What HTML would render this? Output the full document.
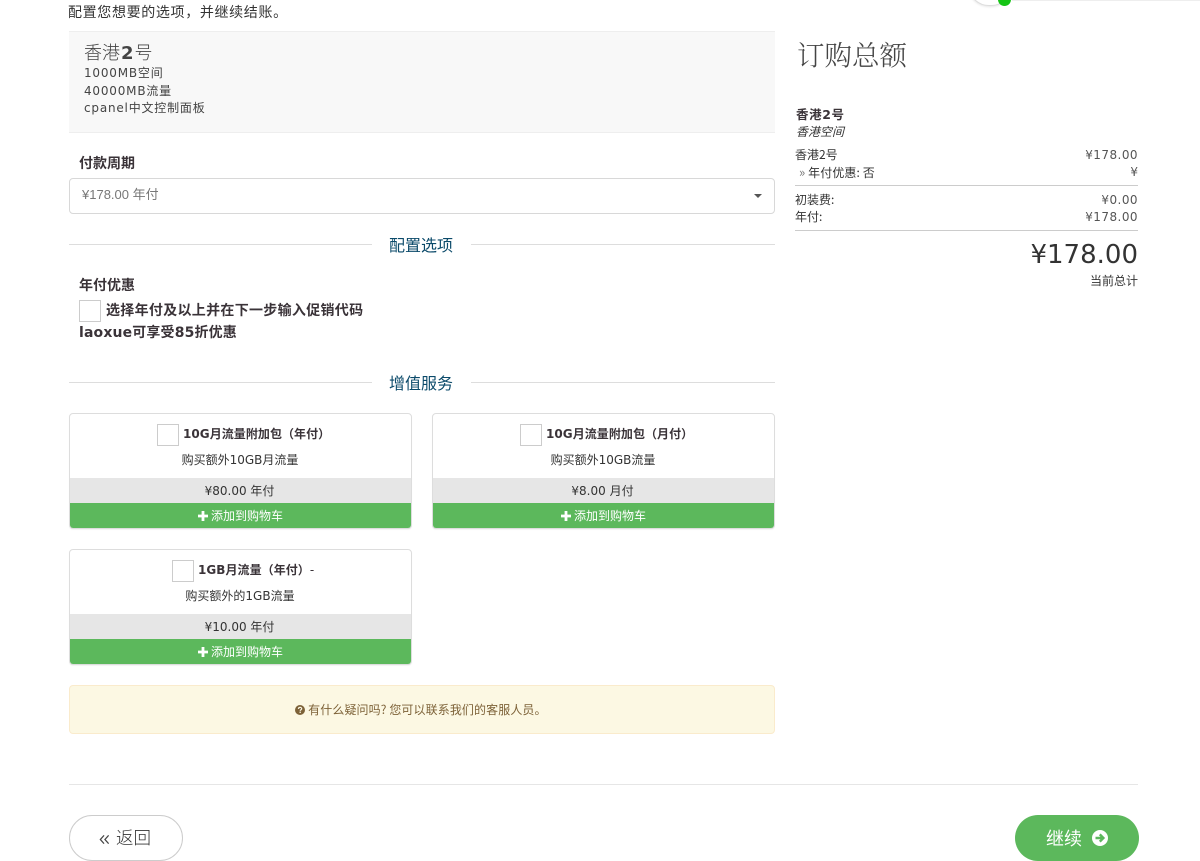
<!DOCTYPE html>
<html lang="zh"><head><meta charset="utf-8"><title>配置</title>
<style>
html,body{margin:0;padding:0;background:#fff}
body{width:1200px;height:861px;overflow:hidden;position:relative;font-family:"DejaVu Sans","Noto Sans CJK SC",sans-serif;color:#333;font-size:12px}
.a{position:absolute;white-space:nowrap;line-height:18px}
.b{font-weight:bold;color:#3a3338}
.r{text-align:right}
.hr{position:absolute;height:1px;background:#ddd}
.sec{color:#0b4a6a;font-size:16px;font-family:"Noto Sans CJK SC",sans-serif;font-weight:normal;line-height:22px}
.cb{position:absolute;width:20px;height:20px;border:1px solid #ccc;background:#fff}
.card{position:absolute;width:341px;height:114px;border:1px solid #ddd;border-radius:4px;overflow:hidden;background:#fff;box-shadow:0 1px 1px rgba(0,0,0,.05)}
.card .p{position:absolute;left:0;right:0;top:64px;height:25px;background:#e6e6e6;text-align:center;line-height:26px;font-size:12px;color:#333}
.card .g{position:absolute;left:0;right:0;top:89px;height:25px;background:#5cb85c;color:#fff;text-align:center;line-height:26px;font-size:12px;font-family:"Noto Sans CJK SC",sans-serif}
.card .t{position:absolute;left:0;right:0;top:11px;line-height:18px;font-weight:bold;font-size:12px;color:#3a3338;letter-spacing:.05px}
.card .d{position:absolute;left:-1px;right:0;top:37px;text-align:center;line-height:18px;font-size:12px}
.card .cb{top:10px}
.plus{display:inline-block;vertical-align:-1px;margin-right:3px}
</style></head><body>

<div style="position:absolute;left:968px;top:-20px;width:42px;height:24px;border:1px solid #ddd;border-radius:0 0 21px 21px;background:#fff;box-shadow:0 1px 2px rgba(0,0,0,.1)"></div>
<div style="position:absolute;left:1012px;top:-2px;width:188px;height:3px;background:#eee"></div>
<div style="position:absolute;left:998px;top:-7px;width:13px;height:13px;border-radius:50%;background:#15c415"></div>

<div class="a" style="left:68px;top:3px;font-size:14px;font-family:'Noto Sans CJK SC',sans-serif;color:#333;letter-spacing:.65px">配置您想要的选项，并继续结账。</div>

<div style="position:absolute;left:69px;top:31px;width:706px;height:100px;background:#f8f8f8;border-top:1px solid #eee;border-bottom:1px solid #eee"></div>
<div class="a" style="left:84px;top:41px;font-size:18px;line-height:22px;color:#444;font-family:'Noto Sans CJK SC',sans-serif;font-weight:300">香港<span style="font-family:'DejaVu Sans';font-weight:bold;font-size:18px;padding:0 1px">2</span>号</div>
<div class="a" style="left:84px;top:65px;letter-spacing:.8px;line-height:17.5px;color:#444">1000MB空间<br>40000MB流量<br>cpanel中文控制面板</div>

<div class="a b" style="left:79px;top:154px;font-size:14px;font-family:'Noto Sans CJK SC',sans-serif">付款周期</div>
<div style="position:absolute;left:69px;top:178px;width:704px;height:34px;border:1px solid #d8d8d8;border-radius:4px;background:#fff"></div>
<div class="a" style="left:82px;top:186px;font-size:13px;color:#777;font-family:'Liberation Sans','Noto Sans CJK SC',sans-serif">¥178.00 年付</div>
<div style="position:absolute;left:754px;top:194px;width:0;height:0;border-left:4px solid transparent;border-right:4px solid transparent;border-top:4px solid #555"></div>

<div class="hr" style="left:69px;top:244px;width:303px"></div>
<div class="hr" style="left:471px;top:244px;width:304px"></div>
<div class="a sec" style="left:389px;top:233px">配置选项</div>

<div class="a b" style="left:79px;top:276px;font-size:14px;font-family:'Noto Sans CJK SC',sans-serif">年付优惠</div>
<div class="cb" style="left:79px;top:300px"></div>
<div class="a b" style="left:106px;top:301px;font-size:14px;letter-spacing:.3px;font-family:'Noto Sans CJK SC',sans-serif">选择年付及以上并在下一步输入促销代码</div>
<div class="a b" style="left:79px;top:324px;font-size:14px;font-family:'DejaVu Sans','Noto Sans CJK SC',sans-serif;letter-spacing:.15px">laoxue可享受85折优惠</div>

<div class="hr" style="left:69px;top:382px;width:303px"></div>
<div class="hr" style="left:471px;top:382px;width:304px"></div>
<div class="a sec" style="left:389px;top:371px">增值服务</div>

<div class="card" style="left:69px;top:413px">
<div class="cb" style="left:87px"></div>
<div class="t" style="left:113px;white-space:nowrap">10G月流量附加包（年付）</div>
<div class="d">购买额外10GB月流量</div>
<div class="p" style="left:-2px">¥80.00 年付</div>
<div class="g"><svg class="plus" width="10" height="10" viewBox="0 0 10 10"><path d="M3.6 0h2.8v3.6H10v2.8H6.4V10H3.6V6.4H0V3.6h3.6z" fill="#fff"/></svg>添加到购物车</div>
</div>

<div class="card" style="left:432px;top:413px">
<div class="cb" style="left:87px"></div>
<div class="t" style="left:113px;white-space:nowrap">10G月流量附加包（月付）</div>
<div class="d">购买额外10GB流量</div>
<div class="p" style="left:-2px">¥8.00 月付</div>
<div class="g"><svg class="plus" width="10" height="10" viewBox="0 0 10 10"><path d="M3.6 0h2.8v3.6H10v2.8H6.4V10H3.6V6.4H0V3.6h3.6z" fill="#fff"/></svg>添加到购物车</div>
</div>

<div class="card" style="left:69px;top:549px">
<div class="cb" style="left:102px"></div>
<div class="t" style="left:128px;white-space:nowrap">1GB月流量（年付）<span style="font-weight:normal">-</span></div>
<div class="d">购买额外的1GB流量</div>
<div class="p" style="left:-2px">¥10.00 年付</div>
<div class="g"><svg class="plus" width="10" height="10" viewBox="0 0 10 10"><path d="M3.6 0h2.8v3.6H10v2.8H6.4V10H3.6V6.4H0V3.6h3.6z" fill="#fff"/></svg>添加到购物车</div>
</div>

<div style="position:absolute;left:69px;top:685px;width:704px;height:47px;background:#fcf8e3;border:1px solid #faebcc;border-radius:4px;color:#7d6238;text-align:center;line-height:48px;font-size:12px;font-family:'Noto Sans CJK SC',sans-serif;letter-spacing:.1px">
<svg width="10" height="10" viewBox="0 0 10 10" style="vertical-align:-1px;margin-left:-2px"><circle cx="5" cy="5" r="5" fill="#7d6238"/><path d="M3.4 3.9C3.5 2.9 4.2 2.4 5.1 2.4 6 2.4 6.7 3 6.7 3.7 6.7 4.7 5.2 4.8 5.2 5.9" fill="none" stroke="#fcf8e3" stroke-width="1.2"/><rect x="4.5" y="6.6" width="1.4" height="1.3" fill="#fcf8e3"/></svg>
有什么疑问吗? 您可以联系我们的客服人员。</div>

<div class="a" style="left:797px;top:36px;font-size:27.5px;line-height:34px;color:#444;font-family:'Noto Serif CJK SC',serif;font-weight:300">订购总额</div>
<div class="a b" style="left:796px;top:105px;font-size:12.5px;font-family:'Noto Sans CJK SC',sans-serif;letter-spacing:.6px">香港<span style="font-family:'DejaVu Sans'">2</span>号</div>
<div class="a" style="left:796px;top:123px;font-size:12px;font-style:italic;font-family:'Noto Sans CJK SC',sans-serif;color:#333">香港空间</div>
<div class="a" style="left:795px;top:146px;font-family:'Noto Sans CJK SC',sans-serif">香港2号</div>
<div class="a" style="left:799px;top:163px;font-family:'Noto Sans CJK SC',sans-serif;letter-spacing:.1px"><span style="color:#777;font-size:13px">»</span> 年付优惠: 否</div>
<div class="a r" style="right:62px;top:146px;letter-spacing:.45px;color:#555">¥178.00</div>
<div class="a r" style="right:62px;top:163px;color:#555">¥</div>
<div class="hr" style="left:795px;top:185px;width:343px;background:#ccc"></div>
<div class="a" style="left:795px;top:191px;font-family:'Noto Sans CJK SC',sans-serif">初装费:</div>
<div class="a" style="left:795px;top:208px;font-family:'Noto Sans CJK SC',sans-serif">年付:</div>
<div class="a r" style="right:62px;top:191px;letter-spacing:.45px;color:#555">¥0.00</div>
<div class="a r" style="right:62px;top:208px;letter-spacing:.45px;color:#555">¥178.00</div>
<div class="hr" style="left:795px;top:230px;width:343px;background:#ccc"></div>
<div class="a r" style="right:62px;top:238px;font-size:26px;line-height:34px;color:#333">¥178.00</div>
<div class="a r" style="right:62px;top:272px;font-family:'Noto Sans CJK SC',sans-serif">当前总计</div>

<div class="hr" style="left:69px;top:784px;width:1069px;background:#e6e6e6"></div>

<div style="position:absolute;left:69px;top:815px;width:112px;height:44px;border:1px solid #ccc;border-radius:23px;background:#fff;color:#444"></div>
<svg width="11" height="11" viewBox="0 0 12 12" style="position:absolute;left:99px;top:834px"><path d="M5.5 1.5 1.5 6l4 4.5M10.5 1.5 6.5 6l4 4.5" fill="none" stroke="#444" stroke-width="1.4"/></svg>
<div class="a" style="left:116px;top:826px;line-height:24px;font-size:17.5px;color:#333;font-family:'Noto Sans CJK SC',sans-serif;font-weight:300">返回</div>

<div style="position:absolute;left:1015px;top:815px;width:124px;height:46px;border-radius:23px;background:#5cb85c;color:#fff;line-height:46px;font-size:18px;font-family:'Noto Sans CJK SC',sans-serif;font-weight:normal">
<span style="position:absolute;left:31px;top:0;white-space:nowrap">继续</span>
<svg width="16" height="16" viewBox="0 0 16 16" style="position:absolute;left:77px;top:15px"><circle cx="8" cy="8" r="8" fill="#fff"/><path d="M3.5 8H11M7.8 4.4 11.4 8 7.8 11.6" fill="none" stroke="#5cb85c" stroke-width="2.4"/></svg>
</div>

</body></html>
